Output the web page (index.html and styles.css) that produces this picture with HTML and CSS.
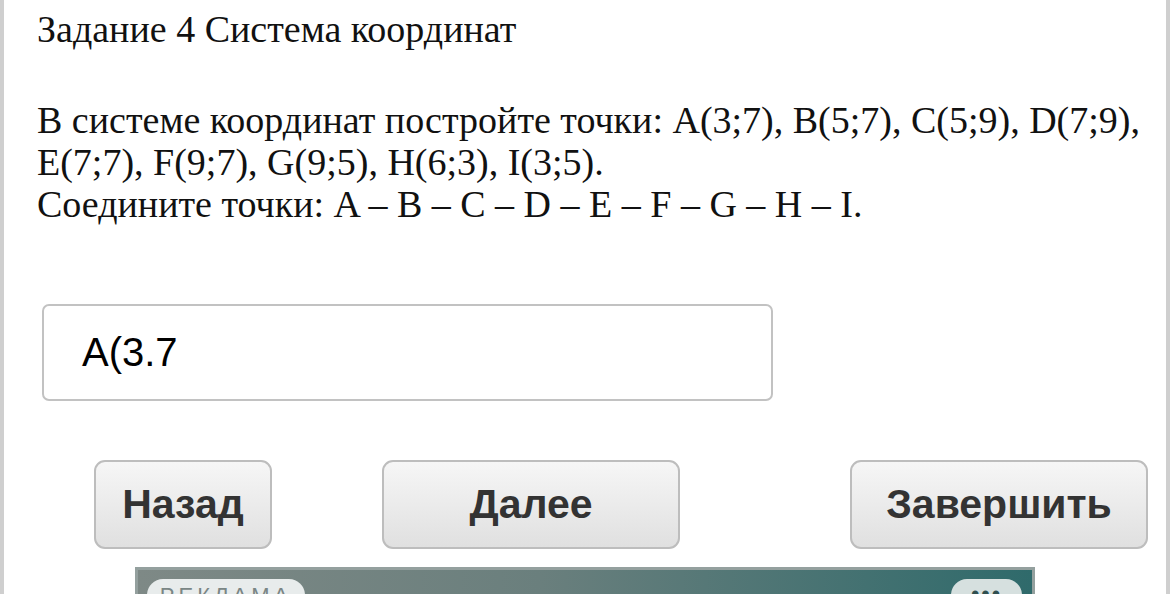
FILE: index.html
```html
<!DOCTYPE html>
<html lang="ru">
<head>
<meta charset="utf-8">
<link rel="stylesheet" href="styles.css">
</head>
<body>
<div class="page">
  <h1 class="title">Задание 4 Система координат</h1>
  <p class="task">В системе координат постройте точки: A(3;7), B(5;7), C(5;9), D(7;9),<br>E(7;7), F(9;7), G(9;5), H(6;3), I(3;5).<br>Соедините точки: A – B – C – D – E – F – G – H – I.</p>
  <div class="answer">A(3.7</div>
  <div class="buttons">
    <button class="btn btn-back">Назад</button>
    <button class="btn btn-next">Далее</button>
    <button class="btn btn-finish">Завершить</button>
  </div>
  <div class="ad">
    <span class="ad-label">РЕКЛАМА</span>
    <span class="ad-more">•••</span>
  </div>
</div>
</body>
</html>
```
FILE: styles.css
```css
html, body {
  margin: 0;
  padding: 0;
  height: 100%;
  overflow: hidden;
  background: #fff;
}
.page {
  box-sizing: border-box;
  height: 594px;
  width: 1170px;
  border-left: 4px solid #cfcfcf;
  border-right: 4px solid #cfcfcf;
  overflow: hidden;
}
.title {
  margin: 0;
  padding: 10px 0 0 33px;
  font-family: "Liberation Serif", "Times New Roman", serif;
  font-weight: normal;
  font-size: 38px;
  line-height: 38px;
  color: #111;
}
.task {
  margin: 51px 0 0 33px;
  font-family: "Liberation Serif", "Times New Roman", serif;
  font-size: 38px;
  line-height: 42px;
  color: #111;
}
.answer {
  box-sizing: border-box;
  margin: 79px 0 0 38px;
  width: 731px;
  height: 97px;
  border: 2px solid #c2c2c2;
  border-radius: 7px;
  padding-left: 38px;
  display: flex;
  align-items: center;
  font-family: "Liberation Sans", Arial, sans-serif;
  font-size: 40px;
  color: #000;
}
.buttons {
  display: flex;
  margin-top: 59px;
  padding-left: 90px;
}
.btn {
  box-sizing: border-box;
  flex-shrink: 0;
  height: 89px;
  border: 2px solid #bdbdbd;
  border-radius: 11px;
  background: linear-gradient(#f6f6f6, #e0e0e0);
  font-family: "Liberation Sans", Arial, sans-serif;
  font-weight: bold;
  font-size: 41px;
  color: #333;
  padding: 0;
}
.btn-back { width: 178px; }
.btn-next { width: 298px; margin-left: 110px; }
.btn-finish { width: 298px; margin-left: 170px; }
.ad {
  box-sizing: border-box;
  margin: 18px 0 0 131px;
  width: 900px;
  height: 60px;
  border: 3px solid #94a09e;
  border-bottom: none;
  background: linear-gradient(90deg, #7e8986 0%, #6a7f7d 45%, #2f6a6b 100%);
  position: relative;
}
.ad-label {
  position: absolute;
  left: 9px;
  top: 9px;
  box-sizing: border-box;
  width: 158px;
  height: 40px;
  padding-top: 4px;
  text-align: center;
  border-radius: 16px;
  background: #e8ecec;
  color: #7a8685;
  font-family: "Liberation Sans", Arial, sans-serif;
  font-size: 22px;
  letter-spacing: 4px;
}
.ad-more {
  position: absolute;
  left: 813px;
  top: 9px;
  width: 71px;
  height: 40px;
  border-radius: 16px;
  background: #d6e0df;
  color: #2f4f4f;
  font-family: "Liberation Sans", Arial, sans-serif;
  font-size: 24px;
  text-align: center;
  line-height: 30px;
  letter-spacing: 2px;
}
```
